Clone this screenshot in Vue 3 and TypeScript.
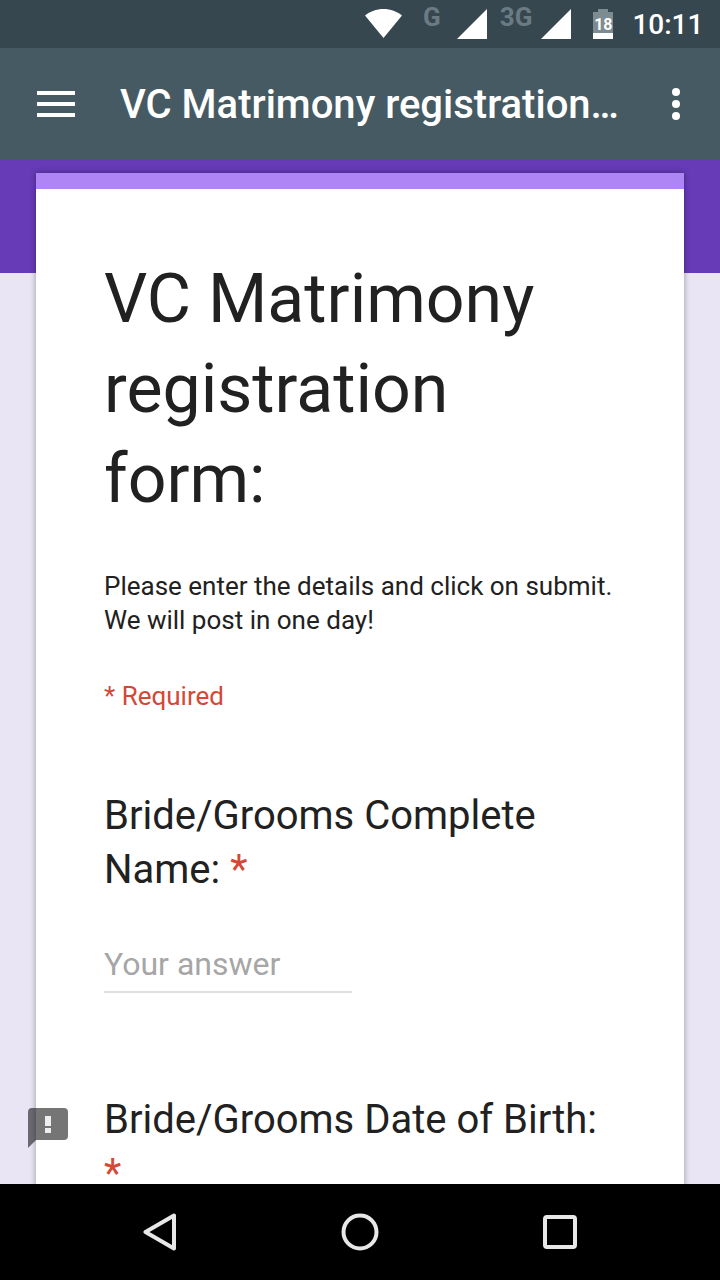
<script setup lang="ts">
const questions = [
  { id: 'name', label: 'Bride/Grooms Complete Name:', answer: true },
  { id: 'dob', label: 'Bride/Grooms Date of Birth:', answer: false },
]
</script>

<template>
  <div class="screen">
    <div class="status-bar">
      <svg class="wifi" width="37" height="29" viewBox="0 0 37 29">
        <path d="M0 6.500C5 2.500 11.500 0 18.500 0S32 2.500 37 6.500L18.500 29Z" fill="#fff" />
      </svg>
      <span class="net net-g">G</span>
      <svg class="signal signal-g" width="30" height="30" viewBox="0 0 30 30">
        <path d="M0 30L30 0V30Z" fill="#fff" />
      </svg>
      <span class="net net-3g">3G</span>
      <svg class="signal signal-3g" width="30" height="30" viewBox="0 0 30 30">
        <path d="M0 30L30 0V30Z" fill="#fff" />
      </svg>
      <div class="battery">
        <div class="battery-cap"></div>
        <div class="battery-body"><span>18</span></div>
      </div>
      <span class="clock">10:11</span>
    </div>

    <header class="app-bar">
      <div class="menu-icon"><i></i><i></i><i></i></div>
      <div class="app-title">VC Matrimony registration form:</div>
      <div class="more-icon"><i></i><i></i><i></i></div>
    </header>

    <main class="page">
      <section class="card">
        <h1 class="form-title">VC Matrimony registration form:</h1>
        <p class="form-desc">Please enter the details and click on submit.<br />We will post in one day!</p>
        <div class="required-note">* Required</div>

        <div v-for="q in questions" :key="q.id" class="question">
          <div class="question-label">{{ q.label }} <span class="star">*</span></div>
          <div v-if="q.answer" class="answer">Your answer</div>
        </div>
      </section>

      <div class="feedback">
        <svg width="40" height="40" viewBox="0 0 40 40">
          <path d="M0 4a4 4 0 0 1 4-4h32a4 4 0 0 1 4 4v24a4 4 0 0 1-4 4H8L0 40Z" fill="rgba(0,0,0,0.54)" />
          <rect x="17" y="8" width="6" height="10" fill="#eee" />
          <rect x="17" y="20" width="6" height="5" fill="#eee" />
        </svg>
      </div>
    </main>

    <nav class="nav-bar">
      <svg width="34" height="38" viewBox="0 0 34 38">
        <path d="M2.500 19L31 2.500V35.500Z" fill="none" stroke="#e8e8e8" stroke-width="4" stroke-linejoin="round" />
      </svg>
      <svg width="38" height="38" viewBox="0 0 38 38">
        <circle cx="19" cy="19" r="16.500" fill="none" stroke="#e8e8e8" stroke-width="4" />
      </svg>
      <svg width="34" height="34" viewBox="0 0 34 34">
        <rect x="2" y="2" width="30" height="30" rx="2" fill="none" stroke="#e8e8e8" stroke-width="4" />
      </svg>
    </nav>
  </div>
</template>

<style>
html,
body {
  margin: 0;
  background: #000;
}
</style>

<style scoped>
.screen {
  width: 720px;
  height: 1280px;
  display: flex;
  flex-direction: column;
  overflow: hidden;
  font-family: Roboto, 'Liberation Sans', sans-serif;
}

.status-bar {
  height: 48px;
  flex: none;
  background: #37474f;
  display: flex;
  align-items: flex-start;
  box-sizing: border-box;
  padding-left: 365px;
  color: #fff;
}

.wifi {
  margin-top: 9px;
}

.net {
  font-size: 26px;
  font-weight: 700;
  line-height: 28px;
  color: #6a7b83;
  margin-top: 3px;
}

.net-g {
  margin-left: 21px;
}

.signal {
  margin-top: 9px;
}

.signal-g {
  margin-left: 16px;
}

.net-3g {
  margin-left: 13px;
}

.signal-3g {
  margin-left: 9px;
}

.battery {
  margin-left: 22px;
  margin-top: 9px;
  width: 20px;
}

.battery-cap {
  width: 10px;
  height: 3px;
  margin: 0 auto;
  background: #7e8b91;
}

.battery-body {
  height: 27px;
  background: linear-gradient(#7e8b91 21px, #fff 21px);
  color: #fff;
  font-size: 16px;
  font-weight: 700;
  text-align: center;
  line-height: 26px;
}

.clock {
  margin-left: 19px;
  font-size: 28px;
  line-height: 50px;
  font-weight: 500;
}

.app-bar {
  height: 112px;
  flex: none;
  background: #465a63;
  display: flex;
  align-items: center;
  box-sizing: border-box;
  padding-left: 37px;
  color: #fff;
}

.menu-icon {
  width: 38px;
  display: flex;
  flex-direction: column;
  gap: 7px;
}

.menu-icon i {
  display: block;
  height: 4px;
  background: #fff;
}

.app-title {
  width: 503px;
  margin-left: 45px;
  font-size: 40px;
  font-weight: 500;
  white-space: nowrap;
  overflow: hidden;
  text-overflow: ellipsis;
}

.more-icon {
  margin-left: 49px;
  display: flex;
  flex-direction: column;
  gap: 4px;
}

.more-icon i {
  display: block;
  width: 8px;
  height: 8px;
  border-radius: 50%;
  background: #fff;
}

.page {
  flex: 1;
  position: relative;
  overflow: hidden;
  background: linear-gradient(#673ab7 113px, #e9e5f4 113px);
  padding: 13px 36px 0;
}

.card {
  background: #fff;
  border-top: 16px solid #af85f6;
  box-shadow: 0 0 6px rgba(0, 0, 0, 0.35);
  padding: 0 68px;
  height: 1100px;
  color: #212121;
}

.form-title {
  margin: 65px 0 0;
  font-size: 68px;
  font-weight: 400;
  line-height: 90px;
}

.form-desc {
  margin: 45px 0 0;
  font-size: 26px;
  line-height: 34px;
}

.required-note {
  margin-top: 42px;
  font-size: 26px;
  line-height: 34px;
  color: #d34836;
}

.question {
  margin-top: 76px;
}

.question + .question {
  margin-top: 100px;
}

.question-label {
  font-size: 40px;
  line-height: 54px;
  color: #212121;
}

.star {
  color: #d34836;
}

.answer {
  margin-top: 42px;
  width: 248px;
  height: 52px;
  font-size: 32px;
  line-height: 50px;
  color: #a6a6a6;
  border-bottom: 2px solid #e0e0e0;
}

.feedback {
  position: absolute;
  left: 28px;
  top: 948px;
  height: 40px;
}

.nav-bar {
  height: 96px;
  flex: none;
  background: #000;
  display: flex;
  align-items: center;
  justify-content: space-between;
  box-sizing: border-box;
  padding: 0 143px;
}
</style>
